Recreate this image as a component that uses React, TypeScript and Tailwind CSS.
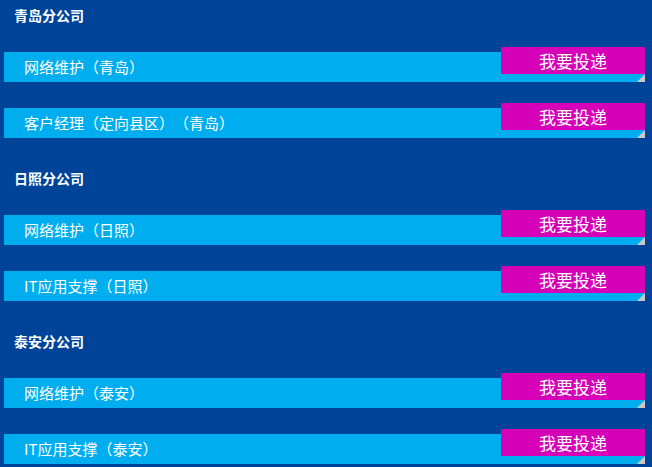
const sections = [
  { name: '青岛分公司', jobs: ['网络维护（青岛）', '客户经理（定向县区）（青岛）'] },
  { name: '日照分公司', jobs: ['网络维护（日照）', 'IT应用支撑（日照）'] },
  { name: '泰安分公司', jobs: ['网络维护（泰安）', 'IT应用支撑（泰安）'] },
]

function JobRow({ title }: { title: string }) {
  return (
    <div className="flex h-[35px]">
      <div className="flex-1 mt-[5px] h-[30px] bg-[#00aeef] flex items-center pl-[20px] text-[15px] text-white">
        {title}
      </div>
      <div className="w-[144px] flex flex-col">
        <button className="h-[27px] bg-[#d600b8] text-white text-[17px] leading-none flex items-center justify-center">
          我要投递
        </button>
        <div className="flex h-[8px]">
          <div className="flex-1 bg-[#00aeef]" />
          <div className="w-[8px] h-[8px] bg-[#00aeef] relative">
            <div className="absolute inset-0 bg-[#c8c8c8] [clip-path:polygon(100%_0,100%_100%,0_100%)]" />
          </div>
        </div>
      </div>
    </div>
  )
}

export default function App() {
  return (
    <div
      className="w-[652px] h-[467px] bg-[#004499] pl-[4px] pr-[7px] overflow-hidden [text-spacing-trim:space-all]"
      style={{ fontFamily: '"Noto Sans CJK SC", "Noto Sans", sans-serif' }}
    >
      {sections.map(section => (
        <div key={section.name} className="mb-[25px]">
          <div className="h-[30px] flex items-center pl-[10px] text-[14px] font-bold text-white">
            {section.name}
          </div>
          <div className="mt-[17px] flex flex-col gap-[21px]">
            {section.jobs.map(job => (
              <JobRow key={job} title={job} />
            ))}
          </div>
        </div>
      ))}
    </div>
  )
}
